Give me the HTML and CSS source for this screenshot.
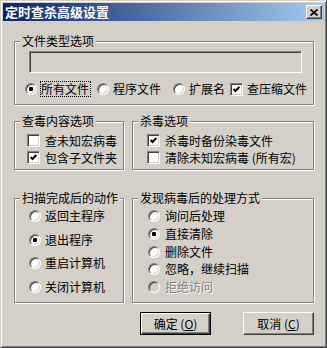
FILE: index.html
```html
<!DOCTYPE html>
<html lang="zh-CN">
  <head>
    <meta charset="UTF-8" />
    <title>定时查杀高级设置</title>
    <link rel="stylesheet" href="styles.css">
  </head>
  <body>
    <div class="window">
      <div class="titlebar">
        <span class="title">定时查杀高级设置</span>
        <span class="close-btn">
          <svg width="8" height="7" viewBox="0 0 8 7"><path d="M0.5 0.5 L7.5 6.5 M7.5 0.5 L0.5 6.5" stroke="#000" stroke-width="1.7" fill="none"/></svg>
        </span>
      </div>

      <div class="content">
        <div class="group group-files">
          <span class="group-label">文件类型选项</span>
          <div class="field"></div>
          <div class="type-row">
            <div class="option"><span class="radio on"></span><span class="text focus">所有文件</span></div>
            <div class="option"><span class="radio"></span><span class="text">程序文件</span></div>
            <div class="option"><span class="radio"></span><span class="text">扩展名</span></div>
            <div class="option">
              <span class="checkbox"><svg width="7" height="7" viewBox="0 0 7 7"><polyline points="0.6,3 2.5,5 6.4,1" fill="none" stroke="#000" stroke-width="2"/></svg></span>
              <span class="text">查压缩文件</span>
            </div>
          </div>
        </div>

        <div class="pair pair-top">
          <div class="group group-scan">
            <span class="group-label">查毒内容选项</span>
            <div class="check-row"><span class="checkbox"></span><span class="text">查未知宏病毒</span></div>
            <div class="check-row">
              <span class="checkbox"><svg width="7" height="7" viewBox="0 0 7 7"><polyline points="0.6,3 2.5,5 6.4,1" fill="none" stroke="#000" stroke-width="2"/></svg></span>
              <span class="text">包含子文件夹</span>
            </div>
          </div>
          <div class="group group-kill">
            <span class="group-label">杀毒选项</span>
            <div class="check-row">
              <span class="checkbox"><svg width="7" height="7" viewBox="0 0 7 7"><polyline points="0.6,3 2.5,5 6.4,1" fill="none" stroke="#000" stroke-width="2"/></svg></span>
              <span class="text">杀毒时备份染毒文件</span>
            </div>
            <div class="check-row"><span class="checkbox"></span><span class="text">清除未知宏病毒 (所有宏)</span></div>
          </div>
        </div>

        <div class="pair pair-bottom">
          <div class="group group-after">
            <span class="group-label">扫描完成后的动作</span>
            <div class="radio-row"><span class="radio"></span><span class="text">返回主程序</span></div>
            <div class="radio-row"><span class="radio on"></span><span class="text">退出程序</span></div>
            <div class="radio-row"><span class="radio"></span><span class="text">重启计算机</span></div>
            <div class="radio-row"><span class="radio"></span><span class="text">关闭计算机</span></div>
          </div>
          <div class="group group-found">
            <span class="group-label">发现病毒后的处理方式</span>
            <div class="radio-row"><span class="radio"></span><span class="text">询问后处理</span></div>
            <div class="radio-row"><span class="radio on"></span><span class="text">直接清除</span></div>
            <div class="radio-row"><span class="radio"></span><span class="text">删除文件</span></div>
            <div class="radio-row"><span class="radio"></span><span class="text">忽略，继续扫描</span></div>
            <div class="radio-row disabled"><span class="radio"></span><span class="text">拒绝访问</span></div>
          </div>
        </div>

        <div class="buttons">
          <button class="btn default">确定 (<u>O</u>)</button>
          <button class="btn">取消 (<u>C</u>)</button>
        </div>
      </div>
    </div>
  </body>
</html>
```

FILE: styles.css
```css
* {
  box-sizing: border-box;
}

body {
  margin: 0;
  font-family: "Noto Sans CJK SC", "Liberation Sans", sans-serif;
  font-size: 12px;
  color: #000;
  background-color: #d4d0c8;
}

.window {
  width: 327px;
  height: 348px;
  padding: 2px;
  background-color: #d4d0c8;
  border: 1px solid;
  border-color: #d4d0c8 #404040 #404040 #d4d0c8;
  box-shadow: inset 1px 1px 0 #fff, inset -1px -1px 0 #808080;
}

.titlebar {
  height: 18px;
  display: flex;
  align-items: center;
  justify-content: space-between;
  padding: 0 2px;
  background: linear-gradient(to right, #0a246a, #a6caf0);
}

.title {
  color: #fff;
  font-weight: bold;
  font-size: 13px;
  line-height: 18px;
}

.close-btn {
  width: 16px;
  height: 14px;
  display: flex;
  align-items: center;
  justify-content: center;
  background-color: #d4d0c8;
  border: 1px solid;
  border-color: #fff #404040 #404040 #fff;
  box-shadow: inset -1px -1px 0 #808080;
}

.content {
  padding: 20px 10px 0 11px;
}

/* etched group box */
.group {
  position: relative;
  border: 1px solid #808080;
  box-shadow: inset 1px 1px 0 #fff, 1px 1px 0 #fff;
}

.group-label {
  position: absolute;
  top: -8px;
  left: 5px;
  padding: 0 2px;
  line-height: 14px;
  background-color: #d4d0c8;
}

.text {
  line-height: 14px;
  white-space: nowrap;
}

/* controls */
.radio {
  flex: none;
  width: 12px;
  height: 12px;
  border-radius: 50%;
  display: flex;
  align-items: center;
  justify-content: center;
  background-color: #fff;
  border: 1px solid;
  border-color: #808080 #fff #fff #808080;
  box-shadow: inset 1px 1px 0 #404040, inset -1px -1px 0 #d4d0c8;
}

.radio.on::after {
  content: "";
  width: 4px;
  height: 4px;
  border-radius: 1px;
  background-color: #000;
}

.checkbox {
  flex: none;
  width: 13px;
  height: 13px;
  display: flex;
  align-items: center;
  justify-content: center;
  background-color: #fff;
  border: 1px solid;
  border-color: #808080 #fff #fff #808080;
  box-shadow: inset 1px 1px 0 #404040, inset -1px -1px 0 #d4d0c8;
}

/* file type group */
.group-files {
  height: 64px;
  padding: 9px 0 0 10px;
}

.field {
  width: 273px;
  height: 22px;
  margin-left: 4px;
  background-color: #d4d0c8;
  border: 1px solid;
  border-color: #808080 #fff #fff #808080;
  box-shadow: inset 1px 1px 0 #404040, inset -1px -1px 0 #d4d0c8;
}

.type-row {
  display: flex;
  align-items: center;
  height: 16px;
  margin-top: 8px;
}

.option {
  display: flex;
  align-items: center;
}

.option:nth-child(1) { width: 72px; }
.option:nth-child(2) { width: 76px; }
.option:nth-child(3) { width: 57px; }

.option .radio,
.option .checkbox {
  margin-right: 3px;
}

.option .text {
  border: 1px solid transparent;
  padding-right: 1px;
}

.option .text.focus {
  border: 1px dotted #000;
}

/* two-column rows */
.pair {
  display: flex;
  gap: 8px;
}

.pair-top {
  margin-top: 16px;
}

.pair-top .group {
  height: 49px;
  padding-top: 10px;
}

.group-scan {
  width: 110px;
  padding-left: 12px;
}

.group-kill {
  width: 182px;
  padding-left: 14px;
}

.check-row {
  height: 17px;
  display: flex;
  align-items: center;
}

.check-row .checkbox {
  margin-right: 5px;
}

.pair-bottom {
  margin-top: 28px;
}

.pair-bottom .group {
  height: 105px;
  padding-top: 9px;
  display: flex;
  flex-direction: column;
}

.group-after {
  width: 110px;
  padding-left: 14px;
  gap: 7.7px;
}

.group-found {
  width: 182px;
  padding-left: 15px;
  gap: 1.75px;
}

.radio-row {
  height: 16px;
  display: flex;
  align-items: center;
}

.group-after .radio {
  margin-right: 4px;
}

.group-found .radio {
  margin-right: 5px;
}

.radio-row.disabled .radio {
  background-color: #d4d0c8;
}

.radio-row.disabled .text {
  color: #808080;
  text-shadow: 1px 1px 0 #fff;
}

/* buttons */
.buttons {
  display: flex;
  justify-content: flex-end;
  gap: 32px;
  margin-top: 9px;
}

.btn {
  width: 71px;
  height: 23px;
  padding: 0;
  font-family: inherit;
  font-size: 12px;
  color: #000;
  background-color: #d4d0c8;
  border: 1px solid;
  border-color: #fff #404040 #404040 #fff;
  box-shadow: inset -1px -1px 0 #808080;
}

.btn.default {
  border-color: #000;
  box-shadow: inset 1px 1px 0 #fff, inset -1px -1px 0 #404040, inset -2px -2px 0 #808080;
}
```
